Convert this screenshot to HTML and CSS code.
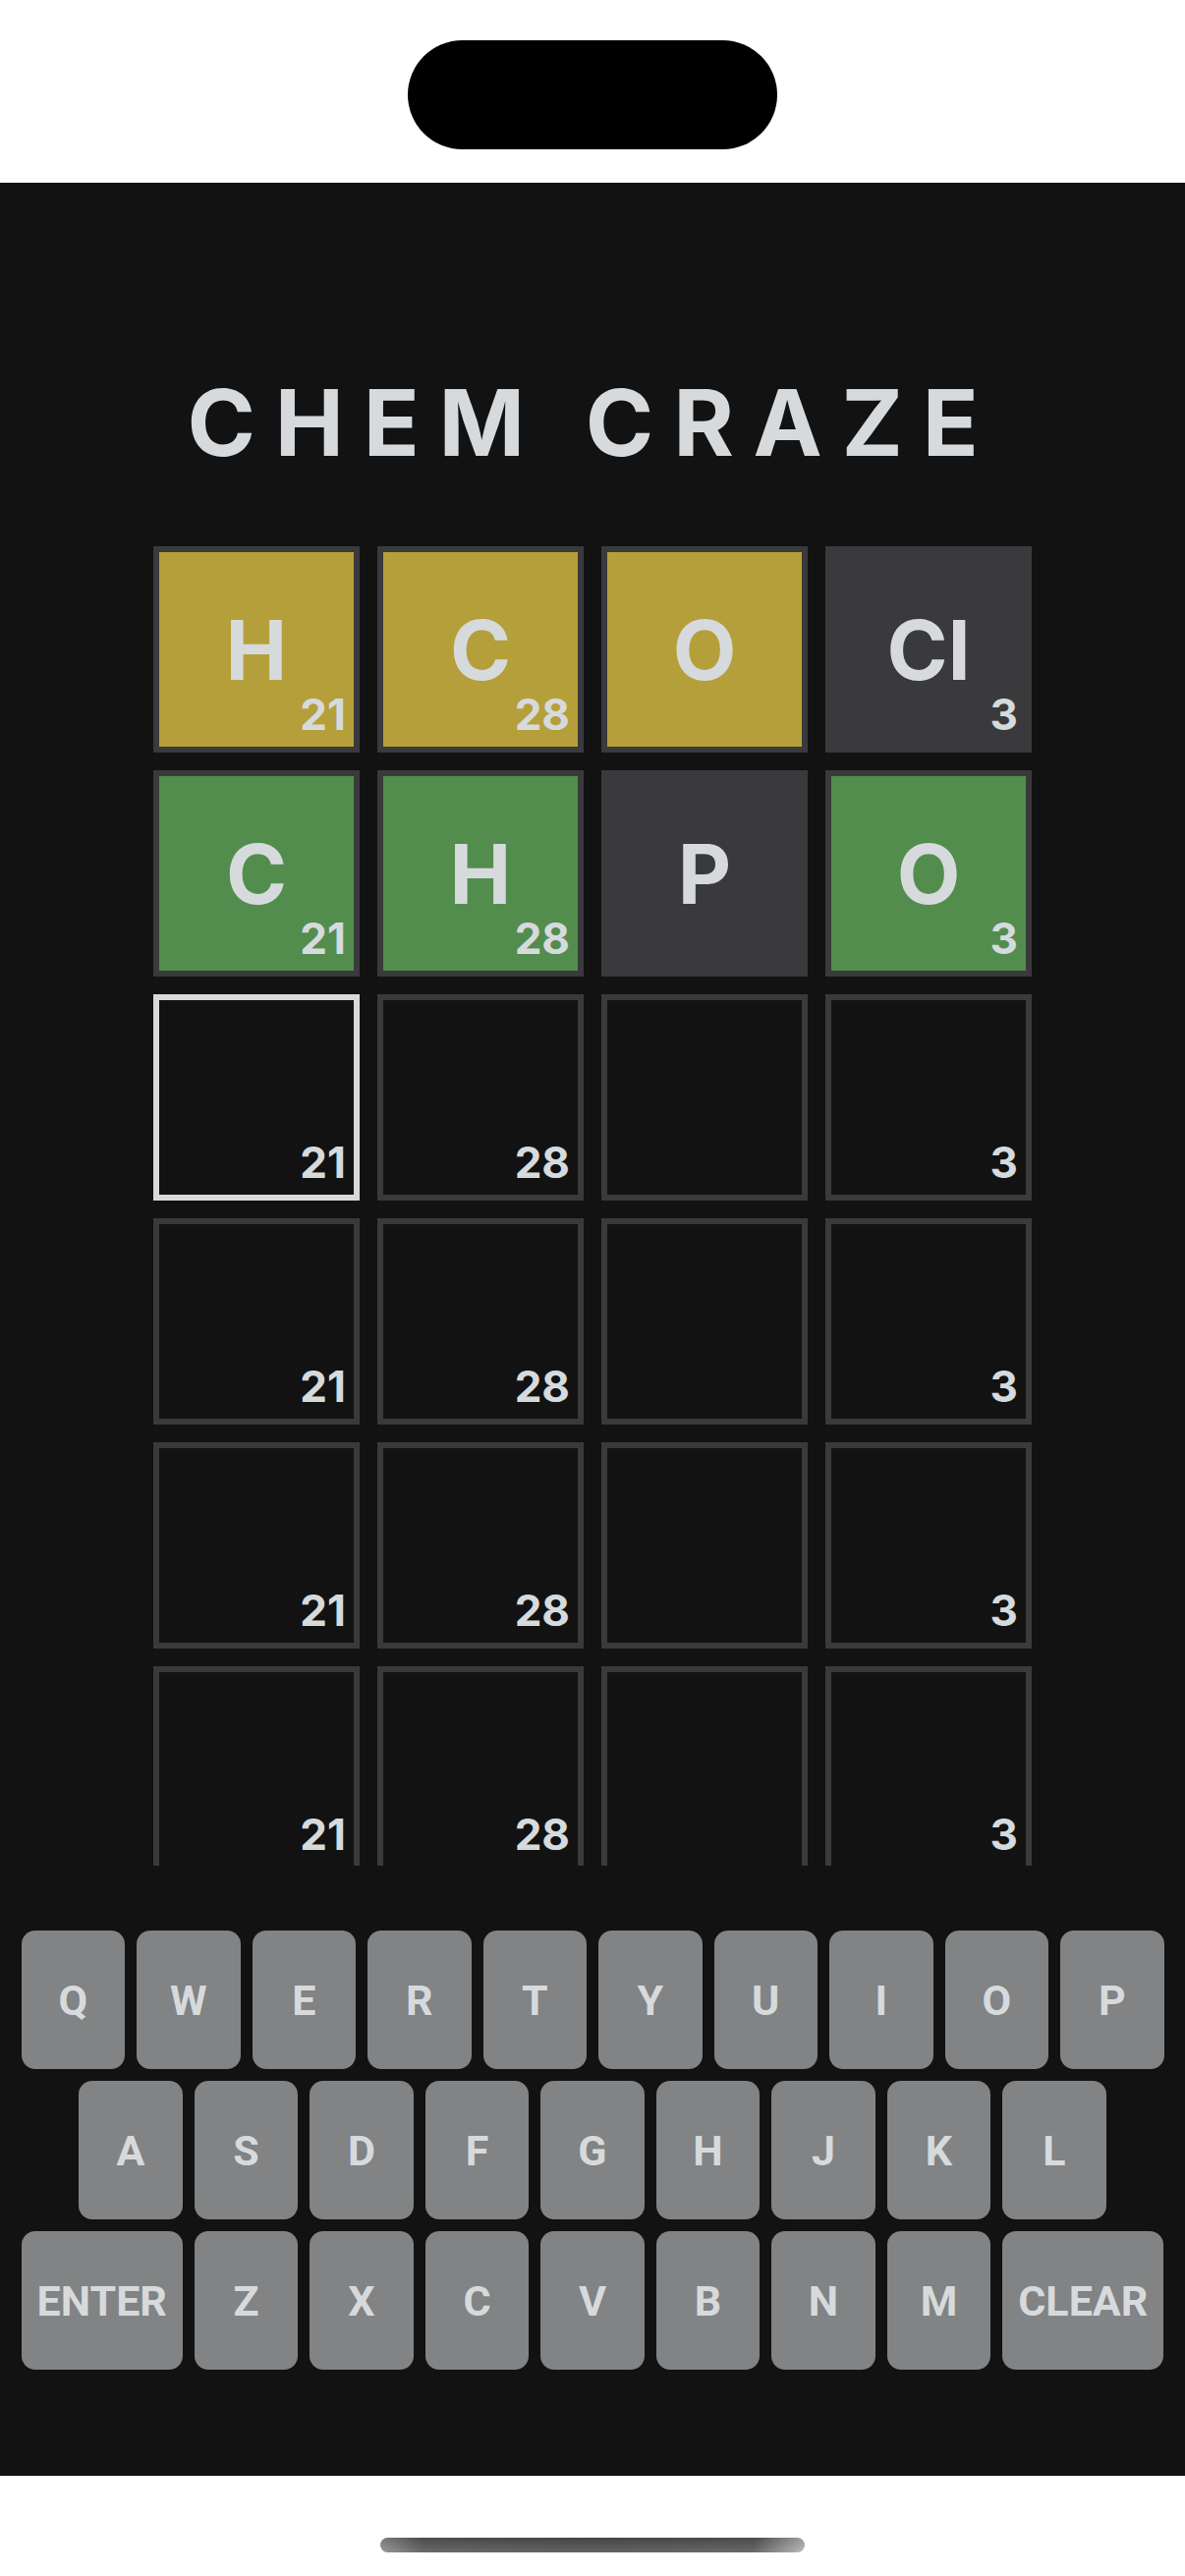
FILE: index.html
```html
<!DOCTYPE html>
<html lang="en">
<head>
    <meta charset="UTF-8">
    <meta name="viewport" content="width=device-width, initial-scale=1.0">
    <title>Chem Craze</title>
    <link rel="stylesheet" href="styles.css">
</head>
<body>
    <div class="device-top">
        <div class="notch"></div>
    </div>

    <main class="app">
        <h1 class="title">CHEM CRAZE</h1>

        <div class="board">
            <div class="row">
                <div class="tile present">H<span class="count">21</span></div>
                <div class="tile present">C<span class="count">28</span></div>
                <div class="tile present">O</div>
                <div class="tile absent">Cl<span class="count">3</span></div>
            </div>
            <div class="row">
                <div class="tile correct">C<span class="count">21</span></div>
                <div class="tile correct">H<span class="count">28</span></div>
                <div class="tile absent">P</div>
                <div class="tile correct">O<span class="count">3</span></div>
            </div>
            <div class="row">
                <div class="tile active"><span class="count">21</span></div>
                <div class="tile"><span class="count">28</span></div>
                <div class="tile"></div>
                <div class="tile"><span class="count">3</span></div>
            </div>
            <div class="row">
                <div class="tile"><span class="count">21</span></div>
                <div class="tile"><span class="count">28</span></div>
                <div class="tile"></div>
                <div class="tile"><span class="count">3</span></div>
            </div>
            <div class="row">
                <div class="tile"><span class="count">21</span></div>
                <div class="tile"><span class="count">28</span></div>
                <div class="tile"></div>
                <div class="tile"><span class="count">3</span></div>
            </div>
            <div class="row">
                <div class="tile"><span class="count">21</span></div>
                <div class="tile"><span class="count">28</span></div>
                <div class="tile"></div>
                <div class="tile"><span class="count">3</span></div>
            </div>
        </div>

        <div class="keyboard">
            <div class="key-row">
                <button class="key">Q</button>
                <button class="key">W</button>
                <button class="key">E</button>
                <button class="key">R</button>
                <button class="key">T</button>
                <button class="key">Y</button>
                <button class="key">U</button>
                <button class="key">I</button>
                <button class="key">O</button>
                <button class="key">P</button>
            </div>
            <div class="key-row">
                <button class="key">A</button>
                <button class="key">S</button>
                <button class="key">D</button>
                <button class="key">F</button>
                <button class="key">G</button>
                <button class="key">H</button>
                <button class="key">J</button>
                <button class="key">K</button>
                <button class="key">L</button>
            </div>
            <div class="key-row">
                <button class="key wide">ENTER</button>
                <button class="key">Z</button>
                <button class="key">X</button>
                <button class="key">C</button>
                <button class="key">V</button>
                <button class="key">B</button>
                <button class="key">N</button>
                <button class="key">M</button>
                <button class="key wide">CLEAR</button>
            </div>
        </div>
    </main>

    <div class="device-bottom">
        <div class="home-bar"></div>
    </div>
</body>
</html>
```

FILE: styles.css
```css
body {
    margin: 0;
    background: #ffffff;
    font-family: 'Inter', 'Noto Sans', sans-serif;
}

/* phone frame bits */
.device-top {
    height: 186px;
    padding-top: 41px;
    box-sizing: border-box;
    display: flex;
    justify-content: center;
}

.notch {
    width: 376px;
    height: 111px;
    background: #000;
    border-radius: 56px;
}

.device-bottom {
    height: 102px;
    padding-top: 63px;
    box-sizing: border-box;
    display: flex;
    justify-content: center;
}

.home-bar {
    width: 432px;
    height: 15px;
    border-radius: 8px;
    background:
        linear-gradient(to bottom, rgba(0,0,0,0.12), rgba(255,255,255,0.12)),
        linear-gradient(to right, #8c8c8c, #555 10%, #4d4d4d 50%, #555 88%, #b3b3b3);
}

/* game */
.app {
    background: #121213;
    height: 2334px;
    display: flex;
    flex-direction: column;
    align-items: center;
}

.title {
    margin: 197px 0 0;
    font-size: 94px;
    line-height: 94px;
    font-weight: 700;
    letter-spacing: 0.21em;
    color: #d7dadc;
}

.board {
    margin-top: 79px;
    height: 1343px;
    flex-shrink: 0;
    overflow: hidden;
    display: flex;
    flex-direction: column;
    gap: 18px;
}

.row {
    display: flex;
    gap: 18px;
}

.tile {
    position: relative;
    width: 210px;
    height: 210px;
    flex-shrink: 0;
    box-sizing: border-box;
    border: 6px solid #3a3a3c;
    display: flex;
    align-items: center;
    justify-content: center;
    font-size: 84px;
    font-weight: 700;
    color: #d7dadc;
}

.tile.present { background: #b59f3b; }
.tile.correct { background: #538d4e; }
.tile.absent { background: #3a3a3c; }
.tile.active { border-color: #d7dadc; }

.count {
    position: absolute;
    right: 8px;
    bottom: 11px;
    font-size: 44px;
    line-height: 1;
    font-weight: 700;
}

.keyboard {
    margin-top: 66px;
    width: 1163px;
    display: flex;
    flex-direction: column;
    gap: 12px;
}

.key-row {
    display: flex;
    justify-content: center;
    gap: 12px;
}

.key {
    width: 105.5px;
    height: 141px;
    flex-shrink: 0;
    padding: 0;
    border: none;
    border-radius: 14px;
    background: #818384;
    color: #d7dadc;
    font-family: 'Roboto', 'Liberation Sans', sans-serif;
    font-size: 43px;
    font-weight: 700;
    display: flex;
    align-items: center;
    justify-content: center;
    cursor: pointer;
}

.key.wide {
    width: 164px;
}
```
